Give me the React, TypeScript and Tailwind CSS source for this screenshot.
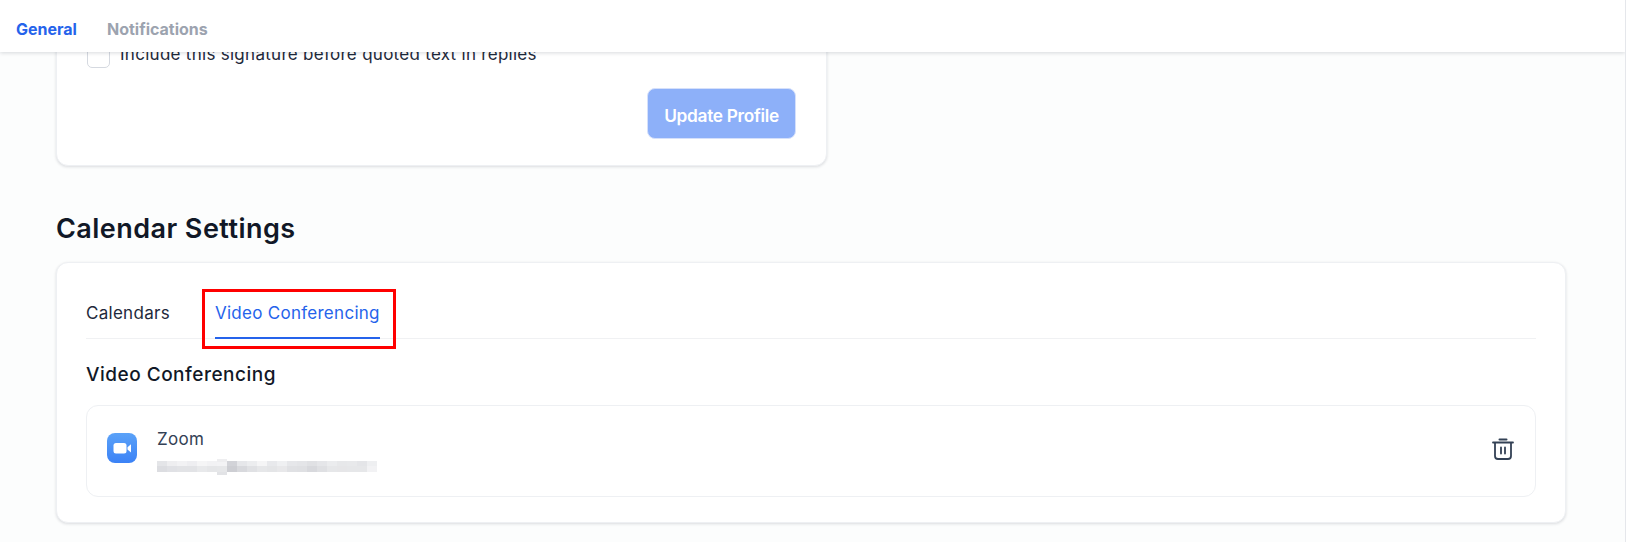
import React from "react";

const blurTop = ["#e4e5e8", "#eeeef0", "#f2f2f4", "#eeeef1", "#f5f5f6", "#f2f2f4", "#f3f3f5", "#d2d3d8", "#e6e7ea", "#ecedef", "#f5f5f6", "#e8e9ec", "#eff0f2", "#e6e7ea", "#e4e5e8", "#e0e1e4", "#e5e6e9", "#ebecee", "#e7e8ea", "#e8e9eb", "#e4e5e8", "#eeeff1"];
const blurBottom = ["#dcdde1", "#e0e1e5", "#e2e3e6", "#e2e3e6", "#e8e9eb", "#e5e6e8", "#e6e7e9", "#cdced3", "#d8d9dd", "#e0e1e4", "#e6e7e9", "#e4e5e7", "#e8e8ea", "#e0e1e4", "#dfe0e3", "#d8d9dd", "#dfe0e3", "#e6e7e9", "#e6e6e8", "#e6e7e9", "#e6e7e9", "#f2f2f4"];

const ZoomIcon = () => (
	<svg width="30" height="30" viewBox="0 0 30 30" className="shrink-0">
		<defs>
			<linearGradient id="zoom-bg" x1="0" y1="0" x2="0" y2="1">
				<stop offset="0" stopColor="#5ba2f8" />
				<stop offset="1" stopColor="#3b82f6" />
			</linearGradient>
		</defs>
		<rect width="30" height="30" rx="8" fill="url(#zoom-bg)" />
		<rect x="6.5" y="10" width="13" height="10.5" rx="2.5" fill="#fff" />
		<path d="M20.5 14.2 24 11.2v8.2l-3.5-3z" fill="#fff" />
	</svg>
);

const TrashIcon = () => (
	<svg width="22" height="22" viewBox="0 0 22 22" fill="none" stroke="#334155" className="shrink-0">
		<path d="M1 4.5h20" strokeWidth="1.8" strokeLinecap="round" />
		<path d="M7.5 1.5h7" strokeWidth="2" strokeLinecap="round" />
		<path d="M3 5v13a3 3 0 0 0 3 3h10a3 3 0 0 0 3-3V5" strokeWidth="1.8" />
		<path d="M9 9.5v6M13 9.5v6" strokeWidth="1.8" strokeLinecap="round" />
	</svg>
);

const BlurredEmail = () => (
	<svg width="220" height="16" viewBox="0 0 220 16" className="block">
		{blurTop.map((c, i) => (
			<rect key={i} x={i * 10} y="2" width="10" height="5" fill={c} />
		))}
		{blurBottom.map((c, i) => (
			<rect key={i} x={i * 10} y="7" width="10" height="6" fill={c} />
		))}
		<rect x="60" y="0" width="10" height="3" fill="#eeeef0" />
		<rect x="60" y="13" width="10" height="3" fill="#e2e3e6" />
	</svg>
);

export default function App() {
	return (
		<div className="h-[542px] overflow-hidden bg-[#fcfdfd] border-r border-[#e5e7eb] font-['Inter',sans-serif] text-[#0f172a]">
			<div className="relative z-10 h-[52px] bg-white shadow-[0_1px_4px_rgba(15,23,42,0.16)] flex items-center gap-[30px] pl-4 text-base font-bold tracking-[0px] pt-[5px]">
				<span className="text-[#2563eb]">General</span>
				<span className="text-[#9ca3af]">Notifications</span>
			</div>

			<div className="pl-[56px] pr-[59px]">
				<div className="w-[771px] h-[126px] -mt-[12px] bg-white rounded-xl border border-[#eef0f3] shadow-[0_1px_3px_rgba(15,23,42,0.14)] px-[30px] pt-[3px]">
					<label className="flex items-center gap-[10px] text-[17px] tracking-[0.28px] text-[#1e293b]">
						<span className="w-[23px] h-[21px] mt-[3px] rounded-[5px] border border-[#d5d9e0] bg-white shrink-0"></span>
						<span className="-mt-[3px]">Include this signature before quoted text in replies</span>
					</label>
					<div className="flex justify-end mt-[20px]">
						<button
							type="button"
							className="w-[149px] h-[51px] rounded-lg bg-[#8db0f9] border border-[#d5e0fb] text-white text-[17.3px] font-semibold tracking-[-0.3px] pt-[4px]"
						>
							Update Profile
						</button>
					</div>
				</div>

				<h2 className="mt-[44px] text-[27px] leading-[38px] font-semibold tracking-[0.45px] text-[#111827]">
					Calendar Settings
				</h2>

				<div className="mt-[14px] h-[261px] bg-white rounded-xl border border-[#eef0f3] shadow-[0_1px_3px_rgba(15,23,42,0.14)] px-[29px]">
					<div className="relative flex h-[76px] border-b border-[#f0f1f3] gap-[45px] text-[17px] tracking-[0.28px] items-end">
						<span className="pb-[12px] text-[#1e293b]">Calendars</span>
						<span className="relative h-[40px] pt-[2px] leading-[24px] text-[#2563eb] border-b-2 border-[#2563eb] -mb-px">
							Video Conferencing
							{/* red marker from the screenshot */}
							<span className="absolute -left-[13px] -right-[16px] -top-[10px] h-[60px] border-[3px] border-[#ff0000]"></span>
						</span>
					</div>

					<h3 className="mt-[22px] text-[19px] leading-[28px] font-medium tracking-[0.5px] text-[#111827]">Video Conferencing</h3>

					<div className="mt-[16px] h-[92px] rounded-xl border border-[#eef0f3] flex items-center justify-between pl-[20px] pr-[21px]">
						<div className="flex items-center gap-[20px]">
							<div className="-mt-[6px]">
								<ZoomIcon />
							</div>
							<div className="flex flex-col gap-[8px] -mt-[1px]">
								<div className="text-[17px] leading-[24px] tracking-[0.3px] text-[#334155]">Zoom</div>
								<BlurredEmail />
							</div>
						</div>
						<div className="-mt-[4px]">
							<TrashIcon />
						</div>
					</div>
				</div>
			</div>
		</div>
	);
}
